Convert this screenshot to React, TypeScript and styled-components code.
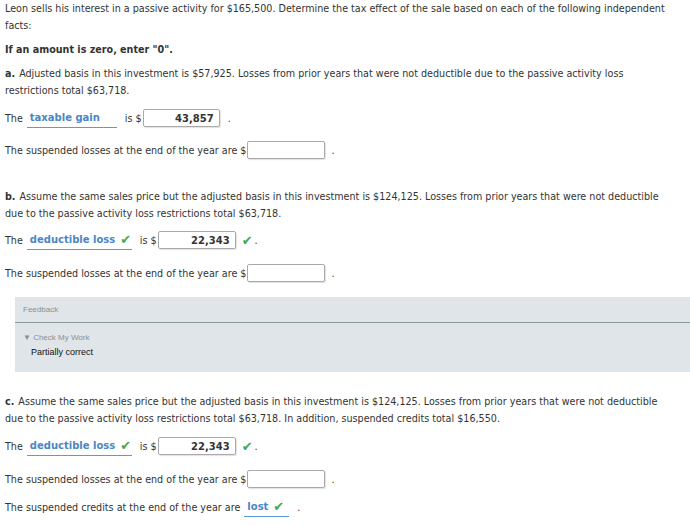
import React from "react";
import styled, { createGlobalStyle } from "styled-components";

const Global = createGlobalStyle`
  html, body { margin: 0; padding: 0; background: #fff; }
  body { font-family: "DejaVu Sans", Verdana, sans-serif; font-size: 9.6px; color: #333; }
`;

const Page = styled.div`
  padding: 0 0 0 5px;
  width: 685px;
`;

const Para = styled.p<{ $mt?: number; $bold?: boolean }>`
  margin: ${(p) => p.$mt ?? 0}px 0 0 0;
  line-height: 17px;
  font-weight: ${(p) => (p.$bold ? "bold" : "normal")};
  padding-right: 16px;
`;

const Label = styled.b`
  margin-right: 4px;
`;

const Row = styled.div<{ $mt: number }>`
  display: flex;
  align-items: center;
  height: 20px;
  margin-top: ${(p) => p.$mt}px;
  white-space: pre;
`;

const Select = styled.span<{ $w: number }>`
  display: inline-flex;
  align-items: center;
  width: ${(p) => p.$w}px;
  height: 19px;
  border-bottom: 1px solid #5b9bd5;
  margin: 0 8px 0 4px;
  padding-left: 3px;
  box-sizing: border-box;
  color: #4a86c5;
  font-weight: bold;
  font-size: 10px;
`;

const Check = styled.span<{ $ml?: number }>`
  color: #46a84a;
  font-weight: bold;
  margin-left: ${(p) => p.$ml ?? 5}px;
  font-size: 13px;
  line-height: 1;
`;

const Input = styled.span<{ $w: number }>`
  display: inline-flex;
  align-items: center;
  justify-content: flex-end;
  width: ${(p) => p.$w}px;
  height: 18px;
  box-sizing: border-box;
  border: 1px solid #a9a9a9;
  border-radius: 2px;
  box-shadow: 1px 1px 1px rgba(0, 0, 0, 0.12);
  padding-right: 5px;
  font-weight: bold;
  font-size: 10px;
  color: #333;
  margin-left: 1px;
`;

const Dot = styled.span<{ $ml: number }>`
  margin-left: ${(p) => p.$ml}px;
`;

const Panel = styled.div`
  margin: 14px 0 0 10px;
  background: #dfe5e9;
  height: 75px;
  font-family: "Liberation Sans", Arial, sans-serif;
`;

const PanelHead = styled.div`
  padding: 8px 0 0 8px;
  height: 17px;
  font-size: 8px;
  color: #8a8f93;
  border-bottom: 1px solid #8c9a9c;
`;

const Toggle = styled.div`
  padding: 10px 0 0 8px;
  font-size: 8px;
  color: #8a8f93;
`;

const Result = styled.div`
  padding: 5px 0 0 16px;
  font-size: 9px;
  color: #111;
`;

export default function App() {
  return (
    <>
      <Global />
      <Page>
        <Para>
          Leon sells his interest in a passive activity for $165,500. Determine the tax effect of the sale based on each of the following independent facts:
        </Para>
        <Para $mt={7} $bold>If an amount is zero, enter "0".</Para>

        <Para $mt={7}>
          <Label>a.</Label>Adjusted basis in this investment is $57,925. Losses from prior years that were not deductible due to the passive activity loss restrictions total $63,718.
        </Para>
        <Row $mt={9}>
          The
          <Select $w={90}>taxable gain</Select>
          is $
          <Input $w={77}>43,857</Input>
          <Dot $ml={8}>.</Dot>
        </Row>
        <Row $mt={12}>
          The suspended losses at the end of the year are $
          <Input $w={78}></Input>
          <Dot $ml={6}>.</Dot>
        </Row>

        <Para $mt={28}>
          <Label>b.</Label>Assume the same sales price but the adjusted basis in this investment is $124,125. Losses from prior years that were not deductible due to the passive activity loss restrictions total $63,718.
        </Para>
        <Row $mt={8}>
          The
          <Select $w={105}>
            deductible loss<Check>✔</Check>
          </Select>
          is $
          <Input $w={78}>22,343</Input>
          <Check $ml={6}>✔</Check>
          <Dot $ml={2}>.</Dot>
        </Row>
        <Row $mt={13}>
          The suspended losses at the end of the year are $
          <Input $w={78}></Input>
          <Dot $ml={6}>.</Dot>
        </Row>

        <Panel>
          <PanelHead>Feedback</PanelHead>
          <Toggle>▼ Check My Work</Toggle>
          <Result>Partially correct</Result>
        </Panel>

        <Para $mt={21}>
          <Label>c.</Label>Assume the same sales price but the adjusted basis in this investment is $124,125. Losses from prior years that were not deductible due to the passive activity loss restrictions total $63,718. In addition, suspended credits total $16,550.
        </Para>
        <Row $mt={9}>
          The
          <Select $w={105}>
            deductible loss<Check>✔</Check>
          </Select>
          is $
          <Input $w={78}>22,343</Input>
          <Check $ml={6}>✔</Check>
          <Dot $ml={2}>.</Dot>
        </Row>
        <Row $mt={13}>
          The suspended losses at the end of the year are $
          <Input $w={78}></Input>
          <Dot $ml={6}>.</Dot>
        </Row>
        <Row $mt={8}>
          The suspended credits at the end of the year are
          <Select $w={45}>
            lost<Check>✔</Check>
          </Select>
          <Dot $ml={0}>.</Dot>
        </Row>
      </Page>
    </>
  );
}
